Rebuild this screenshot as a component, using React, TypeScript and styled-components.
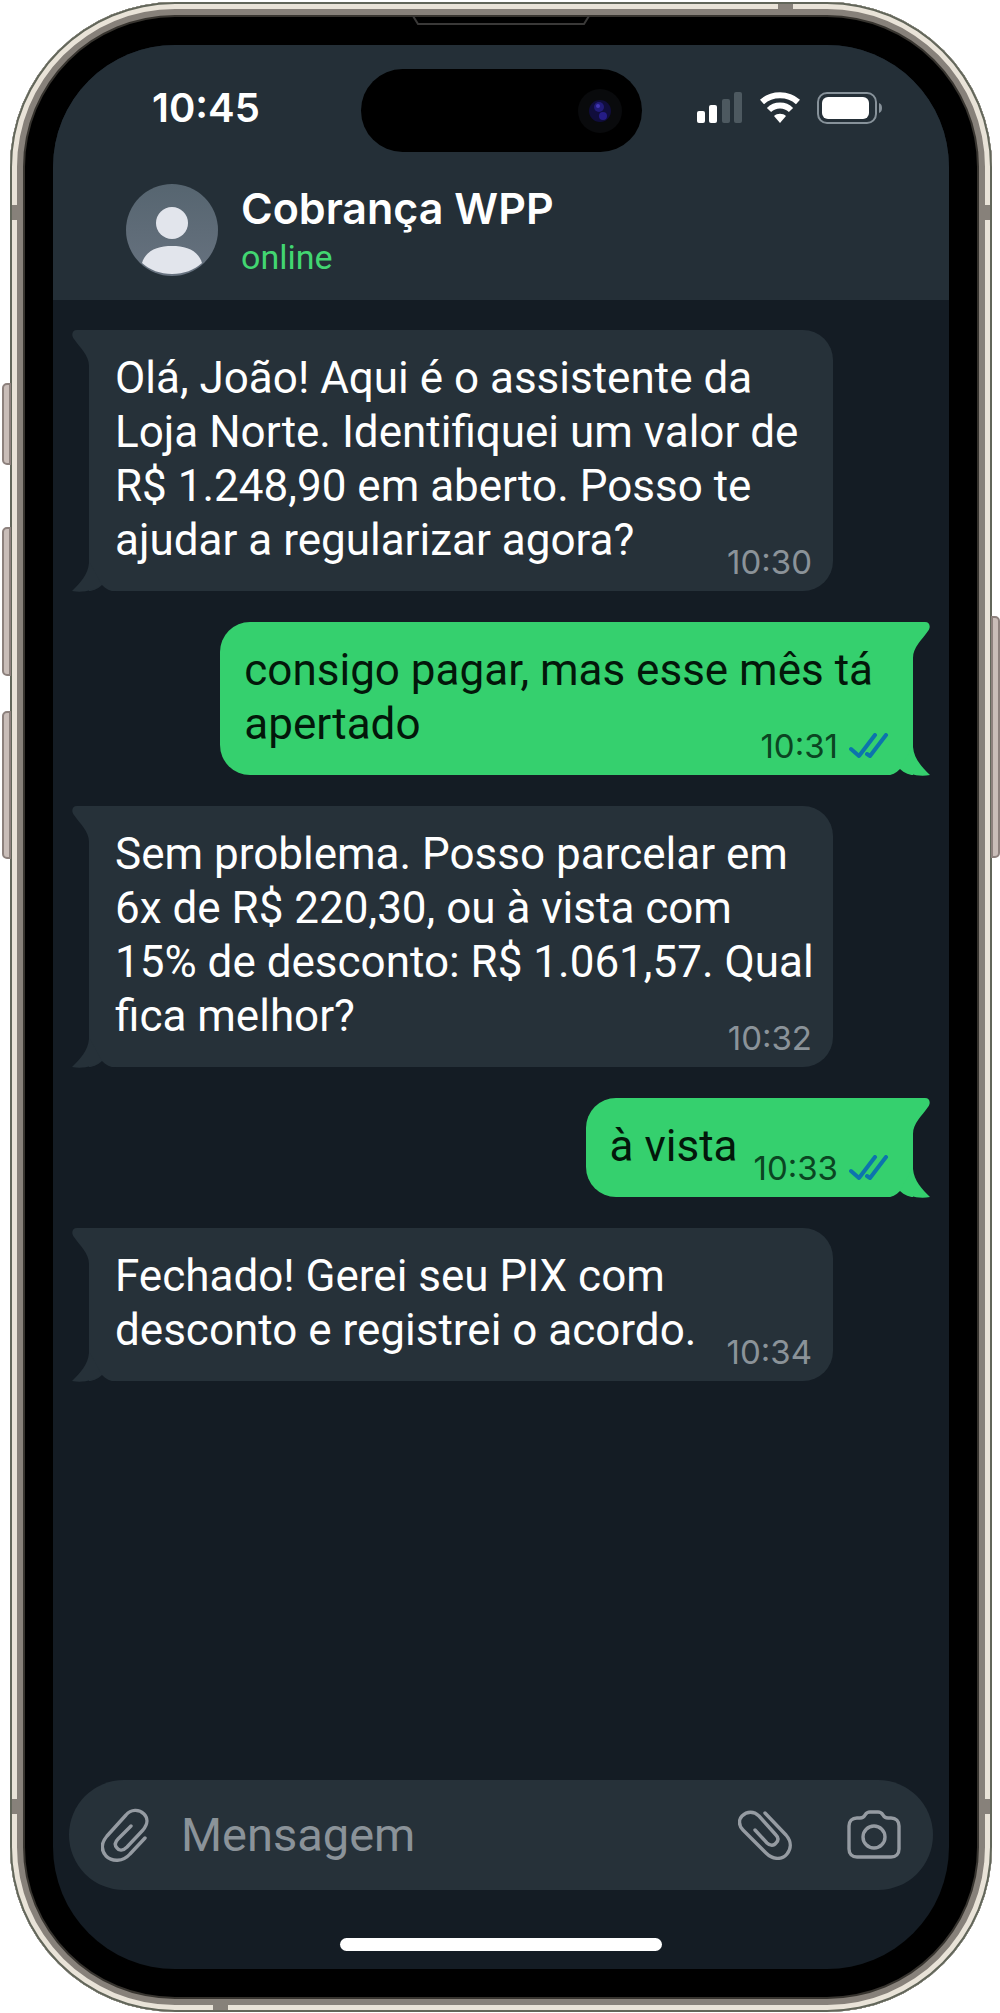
import React from "react";
import styled, { createGlobalStyle } from "styled-components";

const color = {
  chat: "#141c24",
  panel: "#242f37",
  bubble: "#263139",
  green: "#35d06e",
  greenText: "#03170a",
  greenTime: "#0b4522",
  tick: "#0c74ad",
  muted: "#8b9399",
  icon: "#959ba2",
};

const font = {
  display: "Inter, Roboto, sans-serif",
  body: "Roboto, Inter, sans-serif",
};

const GlobalStyle = createGlobalStyle`
  *, *::before, *::after { box-sizing: border-box; }
  body { margin: 0; background: #fff; }
  button, input { font: inherit; color: inherit; border: 0; background: none; padding: 0; }
`;

const Page = styled.div`
  min-height: 100vh;
  padding: 2px 8px 1px 10px;
  display: flex;
  font-family: ${font.body};
`;

const Frame = styled.div`
  position: relative;
  flex: 1;
  min-width: 0;
  display: flex;
  padding: 43px;
  border-radius: 165px;
  background: #000;
  box-shadow:
    inset 0 0 0 2px #62665a,
    inset 0 0 0 7px #e9e3d8,
    inset 0 0 0 13px #87817a,
    inset 0 0 0 15px #37342f;
`;

const Screen = styled.main`
  flex: 1;
  min-width: 0;
  display: flex;
  flex-direction: column;
  overflow: hidden;
  border-radius: 122px;
  background: ${color.chat};
`;

/* Hardware details sitting on the metal frame */
const SideButton = styled.span<{ $side: "left" | "right"; $top: number; $height: number }>`
  position: absolute;
  ${(p) => p.$side}: -8px;
  top: ${(p) => p.$top}px;
  width: 9px;
  height: ${(p) => p.$height}px;
  border: 2px solid #8d817d;
  border-radius: ${(p) => (p.$side === "left" ? "5px 0 0 5px" : "0 5px 5px 0")};
  background: #c9bdb8;
`;

const Antenna = styled.span<{ $edge: "left" | "right" | "top" | "bottom"; $at: number }>`
  position: absolute;
  ${(p) => p.$edge}: 2px;
  ${(p) => (p.$edge === "left" || p.$edge === "right" ? "top" : "left")}: ${(p) => p.$at}px;
  width: ${(p) => (p.$edge === "left" || p.$edge === "right" ? 6 : 15)}px;
  height: ${(p) => (p.$edge === "left" || p.$edge === "right" ? 15 : 6)}px;
  background: #87817a;
`;

const Earpiece = styled.svg`
  position: absolute;
  top: 14px;
  left: 50%;
  margin-left: -89px;
`;

const Header = styled.header`
  background: ${color.panel};
  height: 255px;
  display: flex;
  flex-direction: column;
`;

const StatusBar = styled.div`
  display: grid;
  grid-template-columns: 1fr 281px 1fr;
  align-items: center;
  padding-top: 24px;
`;

const Clock = styled.time`
  justify-self: start;
  padding: 0 0 6px 99px;
  font-family: ${font.display};
  font-size: 40px;
  line-height: 48px;
  font-weight: 600;
  color: #fff;
`;

const Island = styled.div`
  height: 83px;
  border-radius: 42px;
  background: #000;
  display: flex;
  align-items: center;
  justify-content: flex-end;
  padding-right: 20px;
`;

const StatusIcons = styled.div`
  justify-self: end;
  display: flex;
  align-items: center;
  gap: 17px;
  padding: 0 66px 6px 0;
`;

const Contact = styled.div`
  display: flex;
  align-items: center;
  gap: 23px;
  padding: 29px 73px 0;
`;

const ContactText = styled.div`
  display: flex;
  flex-direction: column;
`;

const Name = styled.h1`
  margin: 0;
  font-family: ${font.display};
  font-size: 43px;
  line-height: 54px;
  font-weight: 600;
  color: #fff;
`;

const Presence = styled.span`
  font-size: 34px;
  line-height: 44px;
  color: #42d671;
`;

const Chat = styled.ol`
  flex: 1;
  list-style: none;
  margin: 0;
  padding: 30px 36px;
  display: flex;
  flex-direction: column;
  gap: 31px;
`;

const Bubble = styled.li<{ $out?: boolean; $inline?: boolean }>`
  position: relative;
  display: grid;
  grid-template-columns: ${(p) => (p.$inline ? "auto auto" : "1fr")};
  column-gap: 16px;
  align-self: ${(p) => (p.$out ? "flex-end" : "flex-start")};
  width: ${(p) => (p.$out ? "auto" : "min(100%, 744px)")};
  padding: 21px ${(p) => (p.$out ? 24 : 12)}px 24px ${(p) => (p.$out ? 24 : 26)}px;
  border-radius: ${(p) => (p.$out ? "30px 0 0 30px" : "0 30px 30px 0")};
  background: ${(p) => (p.$out ? color.green : color.bubble)};
  color: ${(p) => (p.$out ? color.greenText : "#fff")};
`;

const Message = styled.p<{ $inline?: boolean; $out?: boolean }>`
  grid-area: 1 / 1;
  margin: 0;
  padding-right: ${(p) => (p.$out && !p.$inline ? 16 : 0)}px;
  font-size: 44px;
  line-height: 54px;
  white-space: pre-line;
`;

const Meta = styled.span<{ $out?: boolean; $inline?: boolean }>`
  grid-area: 1 / ${(p) => (p.$inline ? 2 : 1)};
  place-self: end;
  display: flex;
  align-items: center;
  gap: 11px;
  margin: 0 ${(p) => (p.$out ? 0 : 9)}px -15px 0;
  font-family: ${font.display};
  font-size: 33px;
  line-height: 40px;
  color: ${(p) => (p.$out ? color.greenTime : color.muted)};
`;

const Tail = styled.svg<{ $out?: boolean; $end: "top" | "bottom" }>`
  position: absolute;
  ${(p) => (p.$out ? "right" : "left")}: -17px;
  ${(p) => p.$end}: ${(p) => (p.$end === "top" ? 0 : -1)}px;
  transform: ${(p) => (p.$out ? "scaleX(-1)" : "none")};
`;

const Composer = styled.form`
  display: flex;
  align-items: center;
  height: 110px;
  margin: 0 16px;
  padding: 0 32px;
  border-radius: 55px;
  background: ${color.bubble};
  color: ${color.icon};
`;

const IconButton = styled.button`
  display: flex;
  cursor: pointer;
`;

const MessageInput = styled.input`
  flex: 1;
  min-width: 0;
  margin: 0 32px;
  font-size: 47px;
  line-height: 60px;
  outline: none;
  &::placeholder {
    color: ${color.muted};
    opacity: 1;
  }
`;

const Actions = styled.div`
  display: flex;
  align-items: center;
  gap: 55px;
`;

const HomeBar = styled.div`
  width: 322px;
  height: 13px;
  margin: 48px auto 18px;
  border-radius: 7px;
  background: #fff;
`;

const line = {
  fill: "none",
  stroke: "currentColor",
  strokeWidth: 3.4,
  strokeLinecap: "round",
  strokeLinejoin: "round",
} as const;

const Lens = () => (
  <svg width="44" height="44" viewBox="0 0 44 44" aria-hidden="true">
    <circle cx="22" cy="22" r="22" fill="#090a0c" />
    <circle cx="22" cy="22" r="11" fill="#100d3c" />
    <circle cx="21" cy="18" r="5" fill="#211b78" />
    <circle cx="25" cy="27" r="4" fill="#251c86" />
    <circle cx="20" cy="17" r="2" fill="#4337b5" />
  </svg>
);

const Signal = () => (
  <svg width="46" height="31" viewBox="0 0 46 31" aria-hidden="true">
    <rect x="0" y="19" width="8" height="12" rx="2" fill="#fff" />
    <rect x="12" y="13" width="8" height="18" rx="2" fill="#fff" />
    <rect x="25" y="7" width="8" height="24" rx="2" fill="#4d5960" />
    <rect x="37" y="0" width="8" height="31" rx="2" fill="#4d5960" />
  </svg>
);

const Wifi = () => (
  <svg width="40" height="31" viewBox="0 0 40 31" aria-hidden="true">
    <path d="M2 10 C12 1 28 1 38 10" fill="none" stroke="#fff" strokeWidth="6" />
    <path d="M9 18 C15 12 25 12 31 18" fill="none" stroke="#fff" strokeWidth="6" />
    <path d="M20 31 L14 24 C17 21 23 21 26 24 Z" fill="#fff" />
  </svg>
);

const Battery = () => (
  <svg width="66" height="32" viewBox="0 0 66 32" aria-hidden="true">
    <rect x="1" y="1" width="58" height="30" rx="9" fill="none" stroke="#87929a" strokeWidth="2" />
    <rect x="5" y="5" width="47" height="22" rx="6" fill="#fff" />
    <path d="M62 11 C66 12 66 20 62 21 Z" fill="#87929a" />
  </svg>
);

const Avatar = () => (
  <svg width="92" height="92" viewBox="0 0 92 92" role="img" aria-label="Foto do contato">
    <defs>
      <linearGradient id="avatar" x1="0" y1="0" x2="0" y2="1">
        <stop offset="0" stopColor="#566570" />
        <stop offset="1" stopColor="#67727f" />
      </linearGradient>
    </defs>
    <circle cx="46" cy="46" r="46" fill="url(#avatar)" />
    <circle cx="46" cy="39" r="16" fill="#e2e5ec" />
    <path d="M16 79 C20 66 32 62 46 62 C60 62 72 66 76 79 C68 86 58 90 46 90 C34 90 24 86 16 79 Z" fill="#e2e5ec" />
  </svg>
);

const Ticks = () => (
  <svg width="40" height="26" viewBox="0 0 40 26" role="img" aria-label="Lida">
    <g {...line} stroke={color.tick} strokeWidth={4}>
      <path d="M2 16 L10 23 L26 2" />
      <path d="M18 21 L21 23 L37 2" />
    </g>
  </svg>
);

const ClipRight = () => (
  <svg width="48" height="54" viewBox="0 0 48 54" aria-hidden="true">
    <path {...line} d="M44 30 L29 46 C22 54 11 54 5 48 C0 42 0 35 6 28 L25 7 C30 1 38 1 43 6 C47 10 47 16 42 22 L26 39 C22 43 18 43 16 40 C13 37 14 34 17 31 L30 18" />
  </svg>
);

const ClipLeft = () => (
  <svg width="54" height="50" viewBox="0 0 54 50" aria-hidden="true">
    <path {...line} d="M27 3 L48 25 C54 32 53 39 49 44 C44 50 35 50 28 43 L5 20 C0 15 1 9 4 6 C9 1 16 1 21 6 L38 25 C41 28 40 31 38 33 C36 36 32 36 29 33 L17 20" />
  </svg>
);

const Camera = () => (
  <svg width="54" height="50" viewBox="0 0 54 50" aria-hidden="true">
    <path {...line} d="M10 8 H13 C16 8 17 7 18 5 C20 2 21 2 23 2 H31 C33 2 34 2 36 5 C37 7 38 8 41 8 H44 C49 8 52 11 52 16 V39 C52 44 49 47 44 47 H10 C5 47 2 44 2 39 V16 C2 11 5 8 10 8 Z" />
    <circle {...line} cx="27" cy="27" r="11" />
  </svg>
);

function BubbleTails({ out }: { out?: boolean }) {
  const fill = out ? color.green : color.bubble;
  return (
    <>
      <Tail $out={out} $end="top" width="18" height="36" viewBox="0 0 18 36" aria-hidden="true">
        <path d="M18 0 H5 C0 0 -1 5 2 9 C8 18 17 25 17 36 H18 Z" fill={fill} />
      </Tail>
      <Tail $out={out} $end="bottom" width="44" height="29" viewBox="0 0 44 29" aria-hidden="true">
        <path d="M17 0 C16 12 8 20 0 28 C12 30 22 27 30 22 L18 0 Z" fill={fill} />
        <path d="M14 29 C20 28 26 26 30 22 C34 26 38 28 44 29 Z" fill={color.chat} />
      </Tail>
    </>
  );
}

type Entry = { text: string; time: string; out?: boolean; inline?: boolean };

const entries: Entry[] = [
  {
    text: "Olá, João! Aqui é o assistente da\nLoja Norte. Identifiquei um valor de\nR$ 1.248,90 em aberto. Posso te\najudar a regularizar agora?",
    time: "10:30",
  },
  { text: "consigo pagar, mas esse mês tá\napertado", time: "10:31", out: true },
  {
    text: "Sem problema. Posso parcelar em\n6x de R$ 220,30, ou à vista com\n15% de desconto: R$ 1.061,57. Qual\nfica melhor?",
    time: "10:32",
  },
  { text: "à vista", time: "10:33", out: true, inline: true },
  { text: "Fechado! Gerei seu PIX com\ndesconto e registrei o acordo.", time: "10:34" },
];

export default function App() {
  return (
    <Page>
      <GlobalStyle />
      <Frame>
        <SideButton $side="left" $top={381} $height={82} />
        <SideButton $side="left" $top={525} $height={149} />
        <SideButton $side="left" $top={709} $height={148} />
        <SideButton $side="right" $top={614} $height={242} />
        <Antenna $edge="top" $at={768} />
        <Antenna $edge="bottom" $at={203} />
        <Antenna $edge="left" $at={203} />
        <Antenna $edge="right" $at={203} />
        <Antenna $edge="left" $at={1797} />
        <Antenna $edge="right" $at={1797} />
        <Earpiece width="178" height="9" viewBox="0 0 178 9" aria-hidden="true">
          <path d="M1 0 L6 8 H172 L177 0" fill="none" stroke="#3a3938" strokeWidth="2" />
        </Earpiece>
        <Screen>
          <Header>
            <StatusBar>
              <Clock>10:45</Clock>
              <Island>
                <Lens />
              </Island>
              <StatusIcons>
                <Signal />
                <Wifi />
                <Battery />
              </StatusIcons>
            </StatusBar>
            <Contact>
              <Avatar />
              <ContactText>
                <Name>Cobrança WPP</Name>
                <Presence>online</Presence>
              </ContactText>
            </Contact>
          </Header>
          <Chat>
            {entries.map((m) => (
              <Bubble key={m.time} $out={m.out} $inline={m.inline}>
                <BubbleTails out={m.out} />
                <Message $out={m.out} $inline={m.inline}>
                  {m.text}
                </Message>
                <Meta $out={m.out} $inline={m.inline}>
                  <time>{m.time}</time>
                  {m.out && <Ticks />}
                </Meta>
              </Bubble>
            ))}
          </Chat>
          <Composer onSubmit={(e) => e.preventDefault()}>
            <IconButton type="button" aria-label="Anexar">
              <ClipRight />
            </IconButton>
            <MessageInput type="text" aria-label="Mensagem" placeholder="Mensagem" />
            <Actions>
              <IconButton type="button" aria-label="Anexar arquivo">
                <ClipLeft />
              </IconButton>
              <IconButton type="button" aria-label="Câmera">
                <Camera />
              </IconButton>
            </Actions>
          </Composer>
          <HomeBar />
        </Screen>
      </Frame>
    </Page>
  );
}
